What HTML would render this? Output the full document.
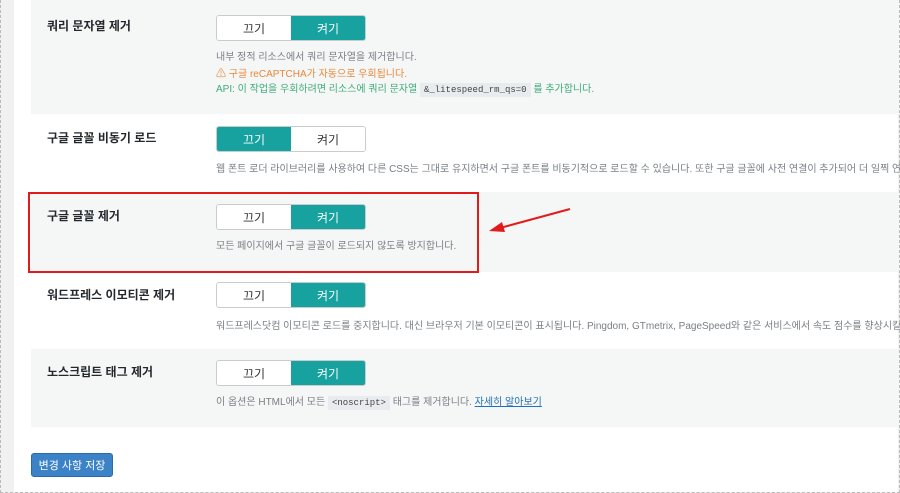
<!DOCTYPE html>
<html><head><meta charset="utf-8"><style>
*{margin:0;padding:0;box-sizing:border-box}
body{width:900px;height:493px;background:#f1f1f1;font-family:"Liberation Sans","Noto Sans CJK KR",sans-serif;position:relative;overflow:hidden}
.frame{position:absolute;left:0;top:0;width:900px;height:493px;border:1px dashed #bbb;border-top:none}
.panel{position:absolute;left:14px;top:0;width:884px;height:492px;background:#fff}
.row{position:absolute;left:31px;width:869px}
.g{background:#f5f6f6}
.lbl{position:absolute;left:16px;font-size:12px;font-weight:bold;color:#23282d}
.tg{position:absolute;left:185px;width:150px;height:26px;display:flex;border:1px solid #c8ccce;border-radius:3px;overflow:hidden;font-size:12px}
.tg span{flex:1;display:flex;align-items:center;justify-content:center;color:#333;background:#fff}
.tg span.on{background:#17a2a0;color:#fff}
.d{position:absolute;left:185px;font-size:10px;color:#7a7f84;white-space:nowrap}
code{font-family:"Liberation Mono",monospace;font-size:9px;background:#e8ecef;padding:2px 4px;color:#444}
.btn{position:absolute;left:31px;top:453px;width:82px;height:24px;background:#3c82c6;border:1px solid #2a6aa8;border-radius:3px;color:#fff;font-size:11px;display:flex;align-items:center;justify-content:center}
</style></head><body>
<div class="panel"></div>
<div class="row g" style="top:0;height:114px">
 <div class="lbl" style="top:17px">쿼리 문자열 제거</div>
 <div class="tg" style="top:15px"><span>끄기</span><span class="on">켜기</span></div>
 <div class="d" style="top:48px">내부 정적 리소스에서 쿼리 문자열을 제거합니다.</div>
 <div class="d" style="top:65px;color:#e8883a">⚠ 구글 reCAPTCHA가 자동으로 우회됩니다.</div>
 <div class="d" style="top:80px;color:#3fab7e">API: 이 작업을 우회하려면 리소스에 쿼리 문자열 <code>&amp;_litespeed_rm_qs=0</code> 를 추가합니다.</div>
</div>
<div class="row" style="top:114px;height:78px">
 <div class="lbl" style="top:15px">구글 글꼴 비동기 로드</div>
 <div class="tg" style="top:12px"><span class="on">끄기</span><span>켜기</span></div>
 <div class="d" style="top:46px">웹 폰트 로더 라이브러리를 사용하여 다른 CSS는 그대로 유지하면서 구글 폰트를 비동기적으로 로드할 수 있습니다. 또한 구글 글꼴에 사전 연결이 추가되어 더 일찍 연결</div>
</div>
<div class="row g" style="top:192px;height:80px">
 <div class="lbl" style="top:15px">구글 글꼴 제거</div>
 <div class="tg" style="top:12px"><span>끄기</span><span class="on">켜기</span></div>
 <div class="d" style="top:45px">모든 페이지에서 구글 글꼴이 로드되지 않도록 방지합니다.</div>
</div>
<div class="row" style="top:272px;height:78px">
 <div class="lbl" style="top:14px">워드프레스 이모티콘 제거</div>
 <div class="tg" style="top:10px"><span>끄기</span><span class="on">켜기</span></div>
 <div class="d" style="top:45px">워드프레스닷컴 이모티콘 로드를 중지합니다. 대신 브라우저 기본 이모티콘이 표시됩니다. Pingdom, GTmetrix, PageSpeed와 같은 서비스에서 속도 점수를 향상시킬 수 있</div>
</div>
<div class="row g" style="top:349px;height:78px">
 <div class="lbl" style="top:14px">노스크립트 태그 제거</div>
 <div class="tg" style="top:11px"><span>끄기</span><span class="on">켜기</span></div>
 <div class="d" style="top:44px">이 옵션은 HTML에서 모든 <code>&lt;noscript&gt;</code> 태그를 제거합니다. <span style="color:#2271b1;text-decoration:underline">자세히 알아보기</span></div>
</div>
<div class="btn">변경 사항 저장</div>
<div style="position:absolute;left:28px;top:192px;width:451px;height:81px;border:2px solid #e21a1a"></div>
<svg style="position:absolute;left:0;top:0" width="900" height="493"><line x1="570" y1="209" x2="500" y2="228" stroke="#e21a1a" stroke-width="2"/><polygon points="489,231 502,222 505,232" fill="#e21a1a"/></svg>
<div class="frame"></div>
</body></html>
